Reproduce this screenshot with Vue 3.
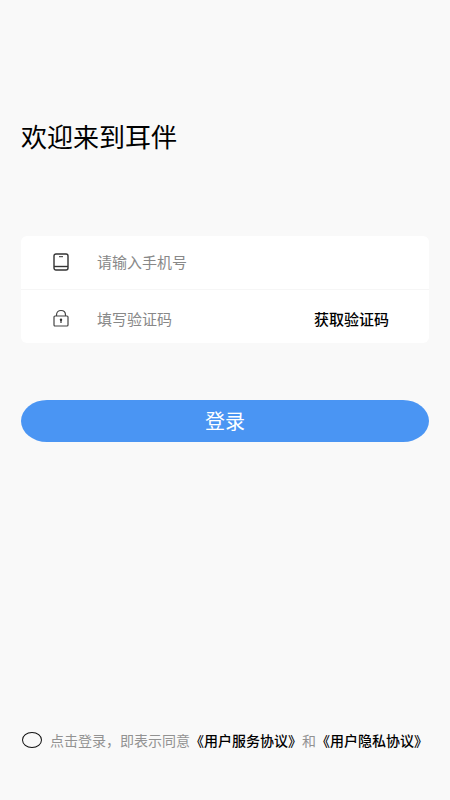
<script setup>
import { ref } from 'vue'

const phone = ref('')
const code = ref('')
const agreed = ref(false)
</script>

<template>
  <main class="page">
    <h1 class="title">欢迎来到耳伴</h1>

    <form class="form" @submit.prevent>
      <div class="card">
        <div class="row">
          <label class="icon" for="phone" aria-label="手机号">
            <svg width="16" height="18" viewBox="0 0 16 18" fill="none" stroke="#333" stroke-width="1.4">
              <rect x="1" y="1" width="14" height="16" rx="2" />
              <path d="M1 13.5H15" />
              <path d="M6 3.7H10" stroke-width="1" />
            </svg>
          </label>
          <input id="phone" v-model="phone" class="field" type="tel" placeholder="请输入手机号" />
        </div>
        <div class="row">
          <label class="icon" for="code" aria-label="验证码">
            <svg width="16" height="18" viewBox="0 0 16 18" fill="none" stroke="#444" stroke-width="1.2">
              <rect x="1" y="7" width="14" height="10" rx="1" />
              <path d="M3.500 7V6C3.500 3 5.500 1.500 8 1.500S12.500 3 12.500 6V7" />
              <circle cx="8" cy="10.700" r="1.200" fill="#333" stroke="none" />
              <path d="M8 10.500V14" stroke="#333" />
            </svg>
          </label>
          <input id="code" v-model="code" class="field" type="text" placeholder="填写验证码" />
          <button class="send" type="button">获取验证码</button>
        </div>
      </div>
      <button class="login" type="submit">登录</button>
    </form>

    <footer class="terms">
      <input id="agree" v-model="agreed" class="check" type="checkbox" />
      <p class="text">
        <label for="agree">点击登录，即表示同意</label><a href="#service">《用户服务协议》</a><span>和</span><a href="#privacy">《用户隐私协议》</a>
      </p>
    </footer>
  </main>
</template>

<style>
body {
  margin: 0;
  background: #f9f9f9;
}
</style>

<style scoped>
.page {
  box-sizing: border-box;
  display: flex;
  flex-direction: column;
  min-height: 100vh;
  padding: 118px 21px 48px;
  background: #f9f9f9;
  color: #000;
  font-family: "Noto Sans CJK SC", sans-serif;
}

.title {
  margin: 0;
  font-size: 26px;
  line-height: 36px;
  font-weight: 400;
}

.form {
  display: flex;
  flex-direction: column;
  gap: 57px;
  margin-top: 82px;
}

.card {
  border-radius: 6px;
  background: #fff;
}

.row {
  box-sizing: border-box;
  display: flex;
  align-items: center;
  height: 53px;
  padding: 0 40px 2px 32px;
}

.row + .row {
  height: 54px;
  padding-top: 5px;
  border-top: 1px solid #f6f6f6;
}

.icon {
  display: flex;
  flex: none;
  margin-right: 28px;
}

.field {
  flex: 1;
  min-width: 0;
  height: 32px;
  padding: 0;
  border: 0;
  outline: 0;
  background: transparent;
  color: #222;
  font: inherit;
  font-size: 15px;
}

.field::placeholder {
  color: #888;
  opacity: 1;
}

.send,
.login {
  padding: 0;
  border: 0;
  background: none;
  font: inherit;
  cursor: pointer;
}

.send {
  flex: none;
  color: #000;
  font-size: 15px;
  font-weight: 500;
}

.login {
  height: 42px;
  padding-bottom: 2px;
  border-radius: 26px / 50%;
  background: #4a95f3;
  color: #fff;
  font-size: 20px;
}

.terms {
  display: flex;
  align-items: center;
  gap: 8px;
  margin-top: auto;
  padding-left: 1px;
  white-space: nowrap;
}

.check {
  appearance: none;
  flex: none;
  box-sizing: border-box;
  width: 20px;
  height: 16px;
  margin: 0;
  border: 1px solid #111;
  border-radius: 50%;
}

.check:checked {
  background: #4a95f3;
}

.text {
  margin: 0;
  color: #929292;
  font-size: 14px;
  line-height: 24px;
}

.text a {
  color: #000;
  font-weight: 500;
  text-decoration: none;
}
</style>
